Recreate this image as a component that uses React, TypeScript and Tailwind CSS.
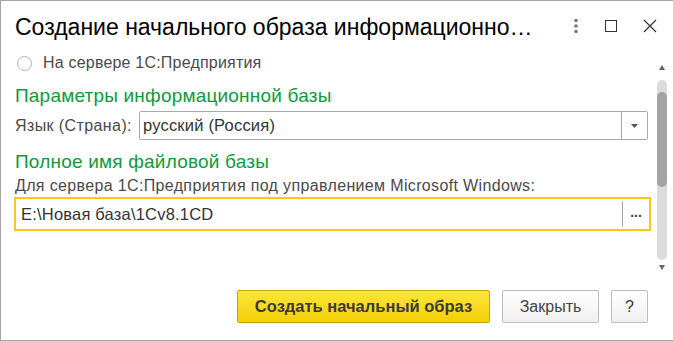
import React from 'react';

const TitleBar = () => (
  <div className="flex items-center h-[50px] pl-[14px] pr-[16px] shrink-0">
    <div className="flex-1 text-[23px] leading-none text-black pt-[3px]">
      Создание начального образа информационно…
    </div>
    <div className="flex items-center gap-[26px]">
      {/* kebab */}
      <svg width="6" height="16" viewBox="0 0 6 16">
        <circle cx="3" cy="2.5" r="1.8" fill="#777" />
        <circle cx="3" cy="8" r="1.8" fill="#777" />
        <circle cx="3" cy="13.5" r="1.8" fill="#777" />
      </svg>
      <svg width="12" height="12" viewBox="0 0 12 12">
        <rect x="0.5" y="0.5" width="11" height="11" fill="none" stroke="#333" strokeWidth="1" />
      </svg>
      <svg width="14" height="14" viewBox="0 0 14 14">
        <path d="M1 1 L13 13 M13 1 L1 13" stroke="#333" strokeWidth="1.2" />
      </svg>
    </div>
  </div>
);

const Scrollbar = () => (
  <div className="w-[12px] flex flex-col items-center pt-[14px]">
    <svg width="6" height="5" viewBox="0 0 6 5">
      <path d="M3 0 L6 5 L0 5 Z" fill="#666" />
    </svg>
    <div className="mt-[10px] w-[10px] h-[180px] rounded-full bg-[#dcdcdc] flex flex-col">
      <div className="mt-[12px] h-[95px] rounded-full bg-[#a3a3a3]" />
    </div>
    <svg className="mt-[5px]" width="6" height="5" viewBox="0 0 6 5">
      <path d="M0 0 L6 0 L3 5 Z" fill="#666" />
    </svg>
  </div>
);

export default function App() {
  return (
    <div className="w-[673px] h-[341px] bg-white border-l border-t border-b border-[#a4a4a4] flex flex-col overflow-hidden font-['Liberation_Sans',Arial,sans-serif]">
      <TitleBar />
      <div className="flex flex-1 pr-[5px]">
        <div className="flex-1 flex flex-col pl-[14px] pr-[8px]">
          <div className="flex items-center h-[22px] mt-[1px] pl-[2px] text-[16px] tracking-[0.2px] text-[#4a4a4a]">
            <span className="w-[15px] h-[15px] rounded-full border border-[#b3b3b3] mr-[11px]" />
            На сервере 1С:Предприятия
          </div>
          <div className="mt-[11px] text-[19px] leading-[22px] tracking-[0.2px] text-[#0f9a3c]">
            Параметры информационной базы
          </div>
          <div className="flex items-center mt-[4px]">
            <span className="w-[124px] text-[16px] tracking-[0.4px] text-[#4a4a4a]">Язык (Страна):</span>
            <div className="flex-1 h-[29px] border border-[#a9a9a9] rounded-[2px] flex items-center">
              <span className="flex-1 pl-[3px] text-[16.5px] tracking-[0.2px] text-[#333]">русский (Россия)</span>
              <div className="w-[26px] h-full border-l border-[#a9a9a9] flex items-center justify-center">
                <svg width="7" height="4" viewBox="0 0 7 4">
                  <path d="M0 0 L7 0 L3.5 4 Z" fill="#555" />
                </svg>
              </div>
            </div>
          </div>
          <div className="mt-[11px] text-[19px] leading-[22px] tracking-[0.2px] text-[#0f9a3c]">
            Полное имя файловой базы
          </div>
          <div className="mt-[4px] text-[16px] leading-[18px] tracking-[0.35px] text-[#4a4a4a]">
            Для сервера 1С:Предприятия под управлением Microsoft Windows:
          </div>
          <div className="-ml-[1px] -mr-[3px] mt-[2px] h-[34px] border-2 border-[#f5c819] flex items-center">
            <span className="flex-1 pl-[5px] text-[16.5px] tracking-[0.2px] text-[#333]">E:\Новая база\1Cv8.1CD</span>
            <div className="w-[27px] h-[26px] border-l border-[#a9a9a9] flex items-center justify-center text-[14px] font-bold text-[#444] leading-none pb-[4px]">
              ...
            </div>
          </div>
        </div>
        <Scrollbar />
      </div>
      <div className="flex justify-end items-center gap-[12px] pr-[25px] pb-[17px] pt-[8px]">
        <button className="h-[33px] w-[253px] rounded-[2px] border border-[#c3a600] bg-gradient-to-b from-[#ffe634] to-[#f3cf00] text-[16.5px] font-bold text-[#3a3a3a]">
          Создать начальный образ
        </button>
        <button className="h-[33px] w-[97px] rounded-[2px] border border-[#bdbdbd] bg-gradient-to-b from-white to-[#f0f0f0] text-[16px] text-[#444]">
          Закрыть
        </button>
        <button className="h-[33px] w-[37px] rounded-[2px] border border-[#bdbdbd] bg-gradient-to-b from-white to-[#f0f0f0] text-[16px] text-[#333]">
          ?
        </button>
      </div>
    </div>
  );
}
